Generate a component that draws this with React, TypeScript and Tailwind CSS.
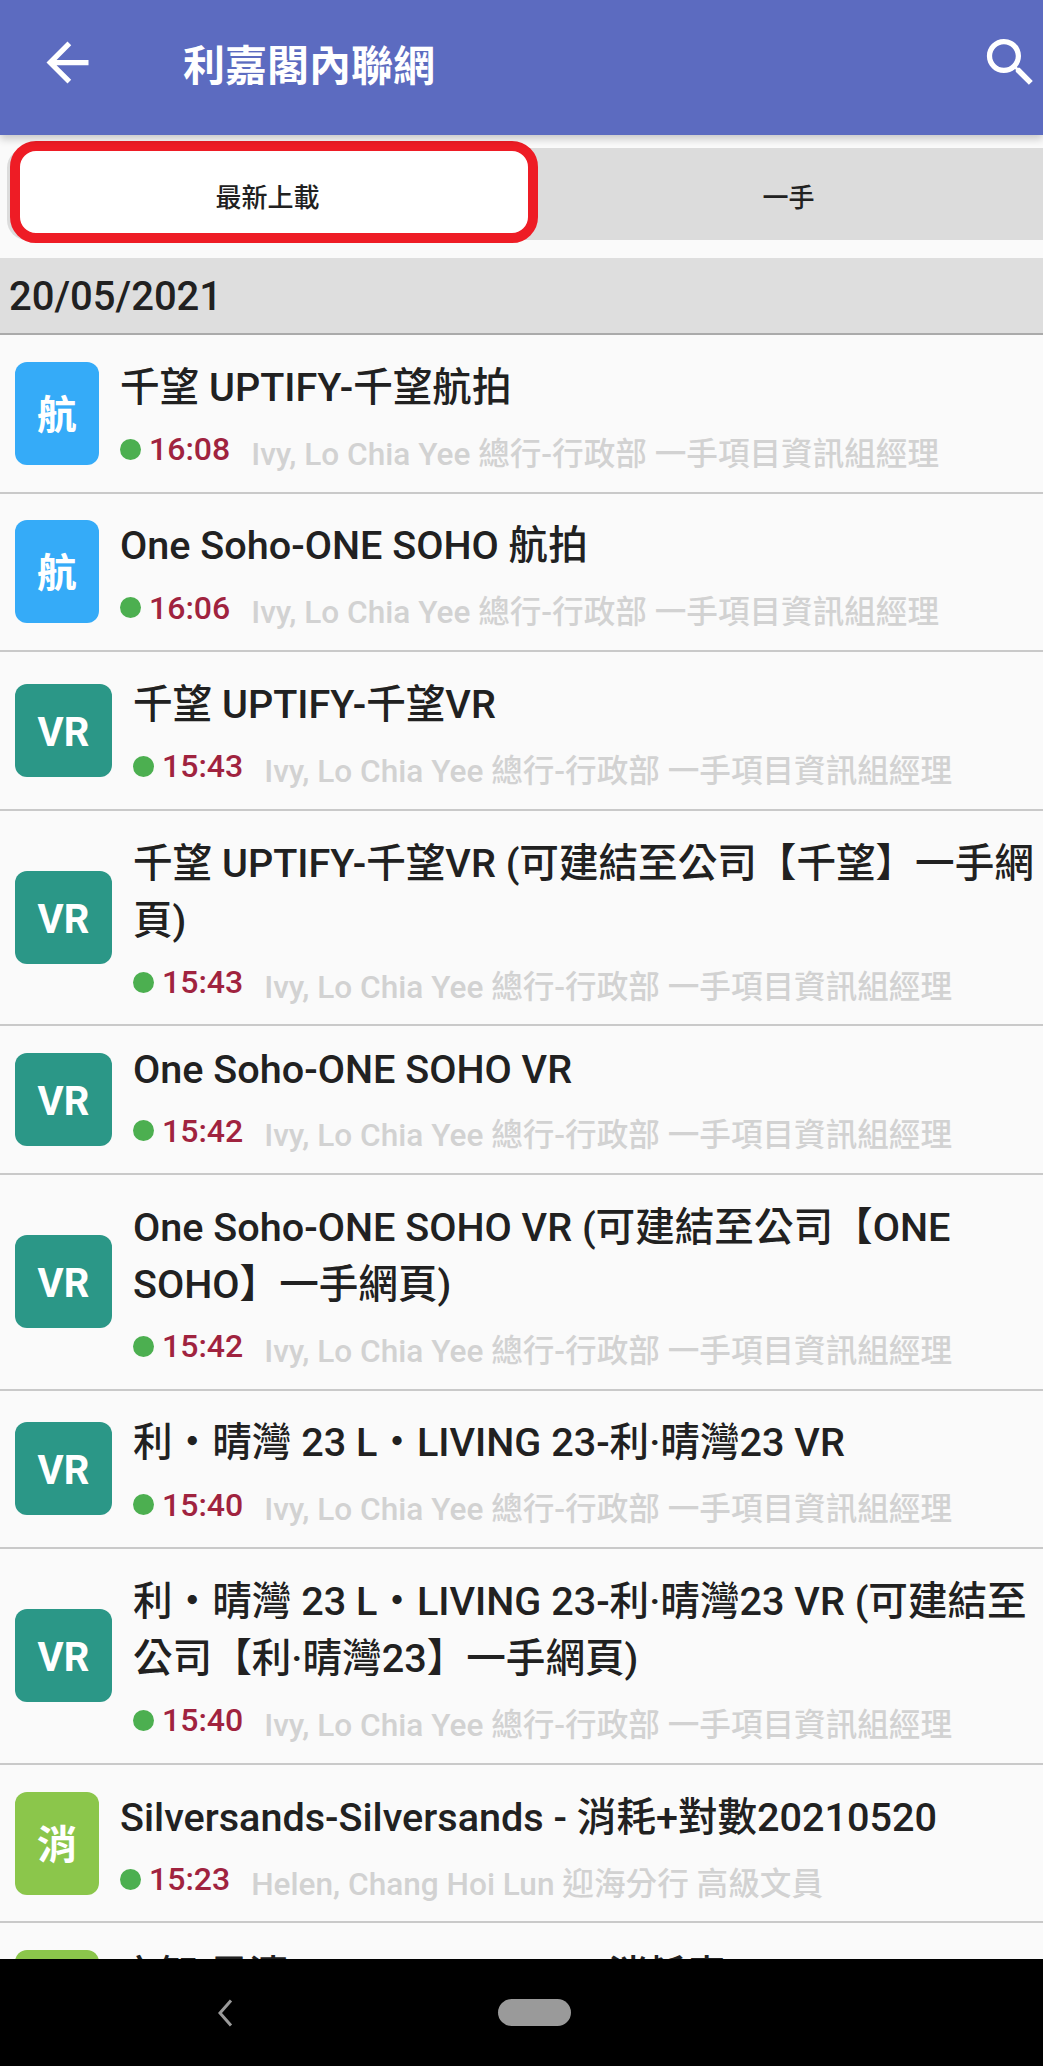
type Row = { tag: string; color: string; title: string; time: string; who: string }

const ivy = "Ivy, Lo Chia Yee 總行-行政部 一手項目資訊組經理"
const blue = "bg-[#35abf8]"
const teal = "bg-[#2b9787]"
const green = "bg-[#8bc64b]"

const rows: Row[] = [
  { tag: "航", color: blue, title: "千望 UPTIFY-千望航拍", time: "16:08", who: ivy },
  { tag: "航", color: blue, title: "One Soho-ONE SOHO 航拍", time: "16:06", who: ivy },
  { tag: "VR", color: teal, title: "千望 UPTIFY-千望VR", time: "15:43", who: ivy },
  { tag: "VR", color: teal, title: "千望 UPTIFY-千望VR (可建結至公司【千望】一手網頁)", time: "15:43", who: ivy },
  { tag: "VR", color: teal, title: "One Soho-ONE SOHO VR", time: "15:42", who: ivy },
  { tag: "VR", color: teal, title: "One Soho-ONE SOHO VR (可建結至公司【ONE SOHO】一手網頁)", time: "15:42", who: ivy },
  { tag: "VR", color: teal, title: "利・晴灣 23 L・LIVING 23-利·晴灣23 VR", time: "15:40", who: ivy },
  { tag: "VR", color: teal, title: "利・晴灣 23 L・LIVING 23-利·晴灣23 VR (可建結至公司【利·晴灣23】一手網頁)", time: "15:40", who: ivy },
  { tag: "消", color: green, title: "Silversands-Silversands - 消耗+對數20210520", time: "15:23", who: "Helen, Chang Hoi Lun 迎海分行 高級文員" },
  { tag: "消", color: green, title: "京智 晨清 UPTIFY-UPTIFY - 消耗表", time: "15:20", who: ivy },
]

function ListRow({ row }: { row: Row }) {
  const vr = row.tag === "VR"
  return (
    <div className="flex items-center border-b-2 border-[#c9c9c9] pl-[15px] pr-2 py-[16.8px]">
      <div
        className={`${row.color} ${vr ? "w-[97px] h-[93px]" : "w-[84px] h-[103px]"} shrink-0 rounded-[12px] flex items-center justify-center pt-[5px] text-white text-[40px] font-bold`}
      >
        {row.tag}
      </div>
      <div className="ml-[21px] min-w-0">
        <div className="mt-[3px] text-[39.6px] leading-[normal] font-medium text-[#212121]">{row.title}</div>
        <div className="mt-[13px] mb-[1px] flex items-center text-[32px] leading-[normal] font-medium">
          <span className="w-[21px] h-[21px] rounded-full bg-[#4caf50] mr-[8px]" />
          <span className="text-[#a0233f]">{row.time}</span>
          <span className="ml-[21px] mt-[3px] text-[31.6px] text-[#d2d2d2]">{row.who}</span>
        </div>
      </div>
    </div>
  )
}

export default function App() {
  return (
    <div className="h-[2066px] flex flex-col overflow-hidden bg-[#fafafa] font-['Roboto','Noto_Sans_CJK_TC',sans-serif]">
      <header className="relative z-10 h-[135px] shrink-0 flex items-center bg-[#5c6bc0] pl-[36px] pr-[1px] pb-[11px] text-white shadow-[0_4px_8px_rgba(0,0,0,0.2)]">
        <svg className="w-[63px] h-[63px]" viewBox="0 0 24 24" fill="currentColor">
          <path d="M20 11H7.83l5.59-5.59L12 4l-8 8 8 8 1.41-1.41L7.83 13H20v-2z" />
        </svg>
        <h1 className="ml-[84px] mt-[8px] flex-1 text-[42px] font-bold">利嘉閣內聯網</h1>
        <svg className="w-[63px] h-[63px]" viewBox="0 0 24 24" fill="currentColor">
          <path d="M15.5 14h-.79l-.28-.27C15.41 12.59 16 11.11 16 9.5 16 5.91 13.09 3 9.5 3S3 5.91 3 9.5 5.91 16 9.5 16c1.61 0 3.09-.59 4.23-1.57l.27.28v.79l5 4.99L20.49 19l-4.99-5zm-6 0C7.01 14 5 11.99 5 9.5S7.01 5 9.5 5 14 7.01 14 9.5 11.99 14 9.5 14z" />
        </svg>
      </header>

      <div className="relative shrink-0 mt-[13px] ml-[7px] h-[92px] flex items-center rounded-l-[20px] bg-[#dcdcdc] pt-[8px] text-[26px] font-medium text-[#212121]">
        <div className="absolute left-[3px] -top-[7px] w-[528px] h-[102px] rounded-[26px] border-[10px] border-[#ee1c25] bg-white" />
        <div className="relative w-[521px] shrink-0 text-center">最新上載</div>
        <div className="relative w-[521px] shrink-0 text-center">一手</div>
      </div>

      <div className="mt-[18px] h-[77px] shrink-0 flex items-center bg-[#dedede] border-b-2 border-[#aaaaaa] pl-[9px] pt-[3px] text-[40px] font-medium text-[#212121]">
        20/05/2021
      </div>

      <div className="flex-1 min-h-0 overflow-hidden">
        {rows.map((row, i) => (
          <ListRow key={i} row={row} />
        ))}
      </div>

      <div className="relative h-[107px] shrink-0 bg-black flex items-center">
        <svg className="ml-[216px] w-[18px] h-[28px]" viewBox="0 0 18 28" fill="none" stroke="#9a9a9a" strokeWidth="3">
          <path d="M15 1.5 L4 14 L15 26.5" />
        </svg>
        <div className="ml-[264px] w-[73px] h-[27px] rounded-full bg-[#9a9a9a]" />
      </div>
    </div>
  )
}
